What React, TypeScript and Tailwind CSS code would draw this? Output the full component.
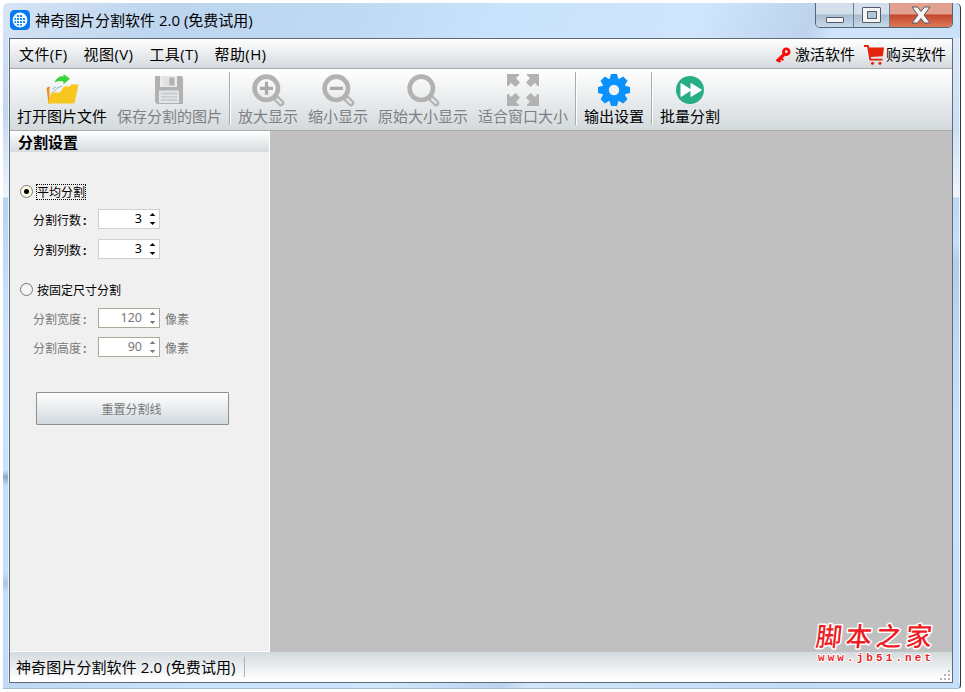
import type { ReactNode } from "react";
import { clsx } from "clsx";

function AppLogo() {
  return (
    <svg width="20" height="20" viewBox="0 0 20 20">
      <rect width="20" height="20" rx="4.5" fill="#0878ee" />
      <circle cx="10" cy="10" r="7.4" fill="#f4faff" />
      <path d="M7 5h2v2H7zM10 5h2v2h-2zM4.500 8H6v2H4.500zM7 8h2v2H7zM10 8h2v2h-2zM13 8h2v2h-2zM4.500 11H6v2H4.500zM7 11h2v2H7zM10 11h2v2h-2zM13 11h2v2h-2zM7 14h2v1.500H7zM10 14h2v1.500h-2z" fill="#1f8cf4" />
    </svg>
  );
}

function FolderIcon() {
  return (
    <svg width="34" height="34" viewBox="0 0 34 34">
      <path d="M1.500 15l2.500-1.500 2 2v15H3.500z" fill="#f08a24" />
      <path d="M4.500 15l6-2 11-1 2 16h-19z" fill="#eef3f6" />
      <path d="M7 16l4-2M8 19l5-4M12 15l5-2" stroke="#9fb8c6" strokeWidth="1" />
      <path d="M3 30.500L6.300 19.500h8.500l4.200-6h5.500l1.500-2H33.500L29.800 29q-.3 1.500-1.800 1.500z" fill="#f6c81f" />
      <path d="M9.500 9.500C12 4 16 2.800 18.500 3.500V1l6.500 4.800-6.500 5.500V8.800C15.500 7.500 12.500 7.800 9.500 9.500z" fill="#3bd43b" />
    </svg>
  );
}

function SaveIcon() {
  return (
    <svg className="mr-[2px]" width="28" height="28" viewBox="0 0 28 28">
      <path d="M0 0h26.500L28 1.500V28H2L0 26z" fill="#b2b2b2" />
      <path d="M5 0h17v11H5z" fill="#e9ebec" />
      <path d="M8 1h7v9H8z" fill="#dfe1e2" />
      <path d="M14.500 1.500h5v8h-5z" fill="#b2b2b2" />
      <path d="M4 14.500h20V27H4z" fill="#e2e5e7" />
      <path d="M6 17.500h16M6 20.800h16M6 24h16" stroke="#c3c6c7" strokeWidth="1.300" />
    </svg>
  );
}

function Magnifier({ children }: { children?: ReactNode }) {
  return (
    <svg width="33" height="33" viewBox="0 0 33 33" fill="none">
      <circle cx="14.300" cy="14.300" r="11.700" stroke="#b2b2b2" strokeWidth="4.600" />
      <path d="M22 22l2.500 2.500" stroke="#b2b2b2" strokeWidth="5" />
      <path d="M25 25l4 4" stroke="#b2b2b2" strokeWidth="6.600" strokeLinecap="round" />
      <path d="M25.300 25.300l3.400 3.400" stroke="#e3e6e8" strokeWidth="2.600" strokeLinecap="round" />
      {children}
    </svg>
  );
}

function FitIcon() {
  const corner = "M0 0h12v1.500L9 4l4 4.500L8.500 13 4 9l-2.500 3H0z";
  return (
    <svg width="32" height="32" viewBox="0 0 32 32" fill="#b2b2b2">
      <path d={corner} />
      <path d={corner} transform="matrix(-1 0 0 1 32 0)" />
      <path d={corner} transform="matrix(1 0 0 -1 0 32)" />
      <path d={corner} transform="matrix(-1 0 0 -1 32 32)" />
    </svg>
  );
}

function GearIcon() {
  return (
    <svg width="32" height="32" viewBox="-16 -16 32 32">
      <g fill="#0a91fb">
        {[0, 45, 90, 135].map((angle) => (
          <path key={angle} d="M-3-16h6l1.600 6v20L3 16h-6l-1.600-6v-20z" transform={`rotate(${angle})`} />
        ))}
        <circle r="12" />
      </g>
      <circle r="5.200" fill="#f0f2f3" />
    </svg>
  );
}

function BatchIcon() {
  return (
    <svg width="28" height="28" viewBox="0 0 28 28">
      <circle cx="14" cy="14" r="14" fill="#27ae87" />
      <path d="M5 7.500l10 6.500-10 6.500zM15 7.500L25.500 14 15 20.500z" fill="#fff" stroke="#fff" strokeWidth="1" strokeLinejoin="round" />
    </svg>
  );
}

function KeyIcon() {
  return (
    <svg width="15" height="16" viewBox="0 0 15 16" fill="none" stroke="#fb0a0a">
      <circle cx="10.300" cy="4.700" r="2.800" strokeWidth="2.900" />
      <path d="M8 7.500L1 14.300" strokeWidth="3.200" />
      <path d="M4.500 10.500l2.800 2.800M2 12.500l2.500 2.500" strokeWidth="2" />
    </svg>
  );
}

function CartIcon() {
  return (
    <svg width="20" height="20" viewBox="0 0 20 20" fill="#e3230b">
      <path d="M0 0h4.500l.8 2.500H20l-1.200 8.700-12 .8.400 1.800h11.300v1.700H5.500L3.200 2H0z" />
      <circle cx="8.500" cy="18.300" r="1.500" />
      <circle cx="16" cy="18.300" r="1.500" />
    </svg>
  );
}

function ToolButton({ icon, label, disabled }: { icon: ReactNode; label: string; disabled?: boolean }) {
  return (
    <button className="flex shrink-0 flex-col items-center" disabled={disabled}>
      <span className="flex h-9 items-center justify-center">{icon}</span>
      <span className={clsx("-mt-px text-[15px] leading-[18px] whitespace-nowrap", disabled ? "text-[#7e8082]" : "text-black")}>
        {label}
      </span>
    </button>
  );
}

function Separator() {
  return <div className="mx-[7px] h-[53px] w-[2px] shrink-0 border-l border-[#a8abad] bg-white" />;
}

function Radio({ label, checked }: { label: string; checked?: boolean }) {
  return (
    <div className="flex h-[18px] items-center">
      <span
        className={clsx(
          "mr-[3px] flex size-[13px] items-center justify-center rounded-full border border-[#77797a]",
          checked ? "bg-[#fffbe2]" : "bg-[#f4f4f4]"
        )}
      >
        {checked && <span className="size-[5px] rounded-full bg-black" />}
      </span>
      <span className={clsx("mt-[2px] border border-dotted leading-[14px]", checked ? "border-black" : "border-transparent")}>
        <span className="relative top-px">{label}</span>
      </span>
    </div>
  );
}

function SpinRow({ label, value, unit, disabled }: { label: string; value: number; unit?: string; disabled?: boolean }) {
  return (
    <div className={clsx("flex h-5 items-center", disabled ? "text-[#77797a]" : "text-black")}>
      <span className="mt-[3px] w-[65px]">
        {label}<span className="ml-[2px] font-bold">:</span>
      </span>
      <div className={clsx("flex h-5 w-[62px] items-center justify-end border bg-white pr-[3px]", disabled ? "border-[#aaa99a]" : "border-[#cfcfcf]")}>
        <span className="mr-[7px] font-['Noto_Sans',sans-serif] text-[12.5px] leading-none">{value}</span>
        <svg width="7" height="12" viewBox="0 0 7 12" fill="currentColor">
          <path d="M3.500 0L6.300 3h-5.600zM3.500 12L.7 9h5.600z" />
        </svg>
      </div>
      {unit && <span className="mt-1 ml-[5px]">{unit}</span>}
    </div>
  );
}

function TitleBar() {
  return (
    <div className="flex h-[35px] justify-between pl-[7px]">
      <div className="flex h-[34px] items-center gap-[5px] text-[15px]">
        <AppLogo />
        <span>神奇图片分割软件 2.0 (免费试用)</span>
      </div>
      <div className="mr-[7px] flex h-[25px] overflow-hidden rounded-b-[5px] border border-t-0 border-[#566578]">
        <div className="flex w-[38px] items-end justify-center border-r border-[#6e7e91] bg-linear-to-b from-[#d3dfea] from-45% via-[#a9bdd0] via-50% to-[#c7d9e9] pb-1">
          <div className="h-[6px] w-[18px] rounded-[1px] border border-[#535a68] bg-[#f4f4f4]" />
        </div>
        <div className="flex w-9 items-center justify-center border-r border-[#6e7e91] bg-linear-to-b from-[#d3dfea] from-45% via-[#a9bdd0] via-50% to-[#c7d9e9]">
          <div className="flex h-4 w-[19px] items-center justify-center rounded-[1px] border border-[#535a68] bg-[#f4f4f4]">
            <div className="h-2 w-[10px] border border-[#535a68] bg-[#b2c5d6]" />
          </div>
        </div>
        <div className="flex w-[62px] items-center justify-center bg-linear-to-b from-[#e2a08f] from-45% via-[#c4452d] via-50% to-[#dc7a58]">
          <svg width="20" height="18" viewBox="0 0 20 18">
            <path d="M1 1h5.500L10 5.500 13.500 1H19l-6 8 6 8h-5.500L10 12.500 6.500 17H1l6-8z" fill="#f6f6f6" stroke="#5b5662" strokeLinejoin="round" />
          </svg>
        </div>
      </div>
    </div>
  );
}

function MenuBar() {
  return (
    <div className="flex h-[30px] shrink-0 items-center justify-between border-b border-[#a7a9aa] bg-linear-to-b from-white to-[#d5dade] pt-[2px] pr-[6px] pl-[9px] text-[15px]">
      <div className="flex gap-4 tracking-[0.4px]">
        {["文件(F)", "视图(V)", "工具(T)", "帮助(H)"].map((item) => (
          <span key={item}>{item}</span>
        ))}
      </div>
      <div className="flex items-center">
        <KeyIcon />
        <span className="mr-[9px] ml-1">激活软件</span>
        <CartIcon />
        <span className="ml-[2px]">购买软件</span>
      </div>
    </div>
  );
}

function ToolBar() {
  return (
    <div className="flex h-[62px] shrink-0 border-b border-[#aaacad] bg-linear-to-b from-white to-[#d3d9dc] pt-[3px] pl-[7px]">
      <div className="flex gap-[10px]">
        <ToolButton icon={<FolderIcon />} label="打开图片文件" />
        <ToolButton icon={<SaveIcon />} label="保存分割的图片" disabled />
      </div>
      <Separator />
      <div className="flex gap-[10px]">
        <ToolButton
          icon={<Magnifier><path d="M8 14.300h13M14.500 7.800v13" stroke="#aaa" strokeWidth="3.200" /></Magnifier>}
          label="放大显示"
          disabled
        />
        <ToolButton
          icon={<Magnifier><path d="M8 14.300h13" stroke="#aaa" strokeWidth="3.200" /></Magnifier>}
          label="缩小显示"
          disabled
        />
        <ToolButton icon={<Magnifier />} label="原始大小显示" disabled />
        <ToolButton icon={<FitIcon />} label="适合窗口大小" disabled />
      </div>
      <Separator />
      <ToolButton icon={<GearIcon />} label="输出设置" />
      <Separator />
      <ToolButton icon={<BatchIcon />} label="批量分割" />
    </div>
  );
}

function SplitPanel() {
  return (
    <div className="flex w-[260px] shrink-0 flex-col border-r border-b border-white bg-[#f0f0f0] text-[12px]">
      <div className="flex h-[21px] items-center bg-linear-to-b from-white to-[#d5dbde] pl-2 text-[15px] font-bold">
        <span className="mt-[2px]">分割设置</span>
      </div>
      <div className="flex flex-col pt-[30px] pl-[10px]">
        <Radio label="平均分割" checked />
        <div className="mt-[9px] flex flex-col gap-[10px] pl-[13px]">
          <SpinRow label="分割行数" value={3} />
          <SpinRow label="分割列数" value={3} />
        </div>
        <div className="mt-[21px]">
          <Radio label="按固定尺寸分割" />
        </div>
        <div className="mt-[10px] flex flex-col gap-[9px] pl-[13px]">
          <SpinRow label="分割宽度" value={120} unit="像素" disabled />
          <SpinRow label="分割高度" value={90} unit="像素" disabled />
        </div>
        <button
          className="mt-[35px] ml-4 h-[33px] w-[193px] rounded-[1px] border border-[#8c8e90] bg-linear-to-b from-white to-[#d2d9dd] pt-[2px] pr-[2px] text-[#77797a]"
          disabled
        >
          重置分割线
        </button>
      </div>
    </div>
  );
}

function Watermark() {
  return (
    <svg className="absolute right-[14px] bottom-[14px]" width="126" height="54" viewBox="0 0 126 54">
      <g fill="#ee1c24" stroke="#fff" strokeLinejoin="round" paintOrder="stroke">
        <g className="font-['Noto_Sans_CJK_SC',sans-serif] text-[26px] font-medium" strokeWidth="3">
          {["脚", "本", "之", "家"].map((char, i) => (
            <text key={char} transform={`translate(${3 + i * 30} 32) skewX(-6)`}>
              {char}
            </text>
          ))}
        </g>
        <text x="6" y="47" textLength="113" className="font-['Liberation_Mono',monospace] text-[11px] font-bold" strokeWidth="2">
          www.jb51.net
        </text>
      </g>
    </svg>
  );
}

function StatusBar() {
  return (
    <div className="flex h-[30px] shrink-0 items-center justify-between bg-linear-to-b from-[#d4dadd] to-white to-90% pl-[6px] text-[15px]">
      <div className="flex items-center">
        <span className="tracking-[0.1px]">神奇图片分割软件 2.0 (免费试用)</span>
        <div className="ml-2 h-5 w-px bg-[#aeb1b3]" />
      </div>
      <svg className="mr-[2px] mb-[2px] self-end" width="10" height="10" viewBox="0 0 10 10" fill="#b3b5b6">
        <path d="M8 0h2v2H8zM4 4h2v2H4zM8 4h2v2H8zM0 8h2v2H0zM4 8h2v2H4zM8 8h2v2H8z" />
      </svg>
    </div>
  );
}

export default function App() {
  return (
    <div className="h-[692px] w-[965px] bg-white pt-[3px] pl-[3px] font-['Open_Sans','Noto_Sans_CJK_SC',sans-serif] text-black">
      <div className="flex h-[686px] w-[958px] flex-col overflow-hidden rounded-t-[5px] rounded-br-[4px] border-r border-b border-r-[#30363e] border-b-[#a9bccd] bg-[linear-gradient(115deg,#d6e4f5_0px,#bdd5ee_150px,#c0daf3_330px,#c8e3fc_460px,#cfe5fc_640px,#bcd3eb_740px,#d0e5fb_765px,#c3dcf5_1000px,#c4dffa_1150px)]">
        <TitleBar />
        <div className="flex h-[645px]">
          <div className="w-[6px] shrink-0 border-r border-[#e9f3fc] bg-[linear-gradient(to_bottom,#cfe1f5_0px,#c3d6ee_75px,#f0f6fd_159px,#b9d3ef_160px,#cde4fb_300px,#c8e2fc_432px,#8fa9c4_439px,#c5dffa_448px,#c5dffa_535px,#adc5e0_545px,#c5dffa_555px,#c2daf5_645px)]" />
          <div className="relative flex w-[944px] shrink-0 flex-col border border-[#5d6a7b]">
            <MenuBar />
            <ToolBar />
            <div className="flex min-h-0 flex-1">
              <SplitPanel />
              <div className="flex-1 bg-[#c0c0c0]" />
            </div>
            <StatusBar />
            <Watermark />
          </div>
          <div className="flex-1 border-r border-[#eef6fd] bg-[linear-gradient(to_bottom,#dbe9f8_0px,#cbdff5_90px,#f0f6fd_159px,#bdd7f5_160px,#c6def7_205px,#b3cdea_225px,#c3dcf6_330px,#c9e4fd_420px,#c6e0fb_645px)]" />
        </div>
      </div>
    </div>
  );
}
